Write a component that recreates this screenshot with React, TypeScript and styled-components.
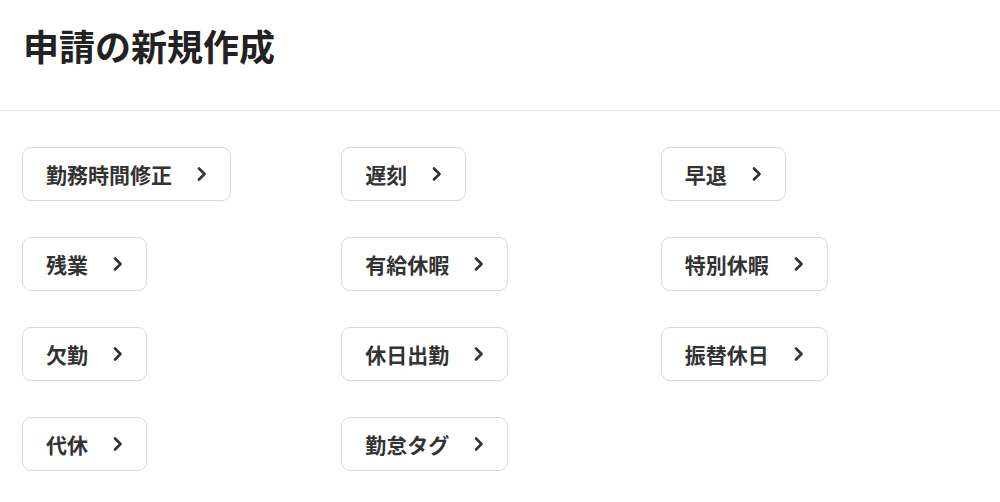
import React from 'react';
import styled, { createGlobalStyle } from 'styled-components';

const ITEMS = [
    '勤務時間修正',
    '遅刻',
    '早退',
    '残業',
    '有給休暇',
    '特別休暇',
    '欠勤',
    '休日出勤',
    '振替休日',
    '代休',
    '勤怠タグ',
];

const Chevron: React.FC = () => (
    <ChevronSvg viewBox="0 0 10 14" width={10} height={14}>
        <polyline
            points="2,1.5 7.5,7 2,12.5"
            fill="none"
            stroke="currentColor"
            strokeWidth={2.6}
            strokeLinecap="round"
            strokeLinejoin="round"
        />
    </ChevronSvg>
);

const App: React.FC = () => {
    return (
        <>
            <GlobalStyle />
            <Page>
                <Header>
                    <Title>申請の新規作成</Title>
                </Header>
                <Grid>
                    {ITEMS.map((label) => (
                        <Cell key={label}>
                            <RequestButton type="button">
                                <Label>{label}</Label>
                                <Chevron />
                            </RequestButton>
                        </Cell>
                    ))}
                </Grid>
            </Page>
        </>
    );
};

const GlobalStyle = createGlobalStyle`
    html, body {
        margin: 0;
        padding: 0;
        background: #fff;
    }
    body {
        font-family: "Noto Sans CJK JP", "Noto Sans", sans-serif;
        color: #333;
    }
`;

const Page = styled.div`
    width: 1000px;
    min-height: 502px;
    background: #fff;
`;

const Header = styled.div`
    padding: 18px 23px 38px;
    border-bottom: 1px solid #e3e3e3;
`;

const Title = styled.h1`
    margin: 0;
    font-size: 36px;
    line-height: 54px;
    font-weight: 700;
    color: #222;
`;

const Grid = styled.div`
    display: grid;
    grid-template-columns: repeat(3, 1fr);
    row-gap: 36px;
    padding: 36px 20px 0 22px;
`;

const Cell = styled.div`
    display: flex;
`;

const RequestButton = styled.button`
    display: flex;
    align-items: center;
    gap: 25px;
    height: 54px;
    padding: 0 23px 0 23px;
    border: 1px solid #d9d9d9;
    border-radius: 9px;
    background: #fff;
    color: #333;
    font-family: inherit;
    cursor: pointer;
`;

const Label = styled.span`
    font-size: 21px;
    font-weight: 700;
    line-height: 1;
    color: #333;
`;

const ChevronSvg = styled.svg`
    display: block;
    color: #333;
`;

export default App;
